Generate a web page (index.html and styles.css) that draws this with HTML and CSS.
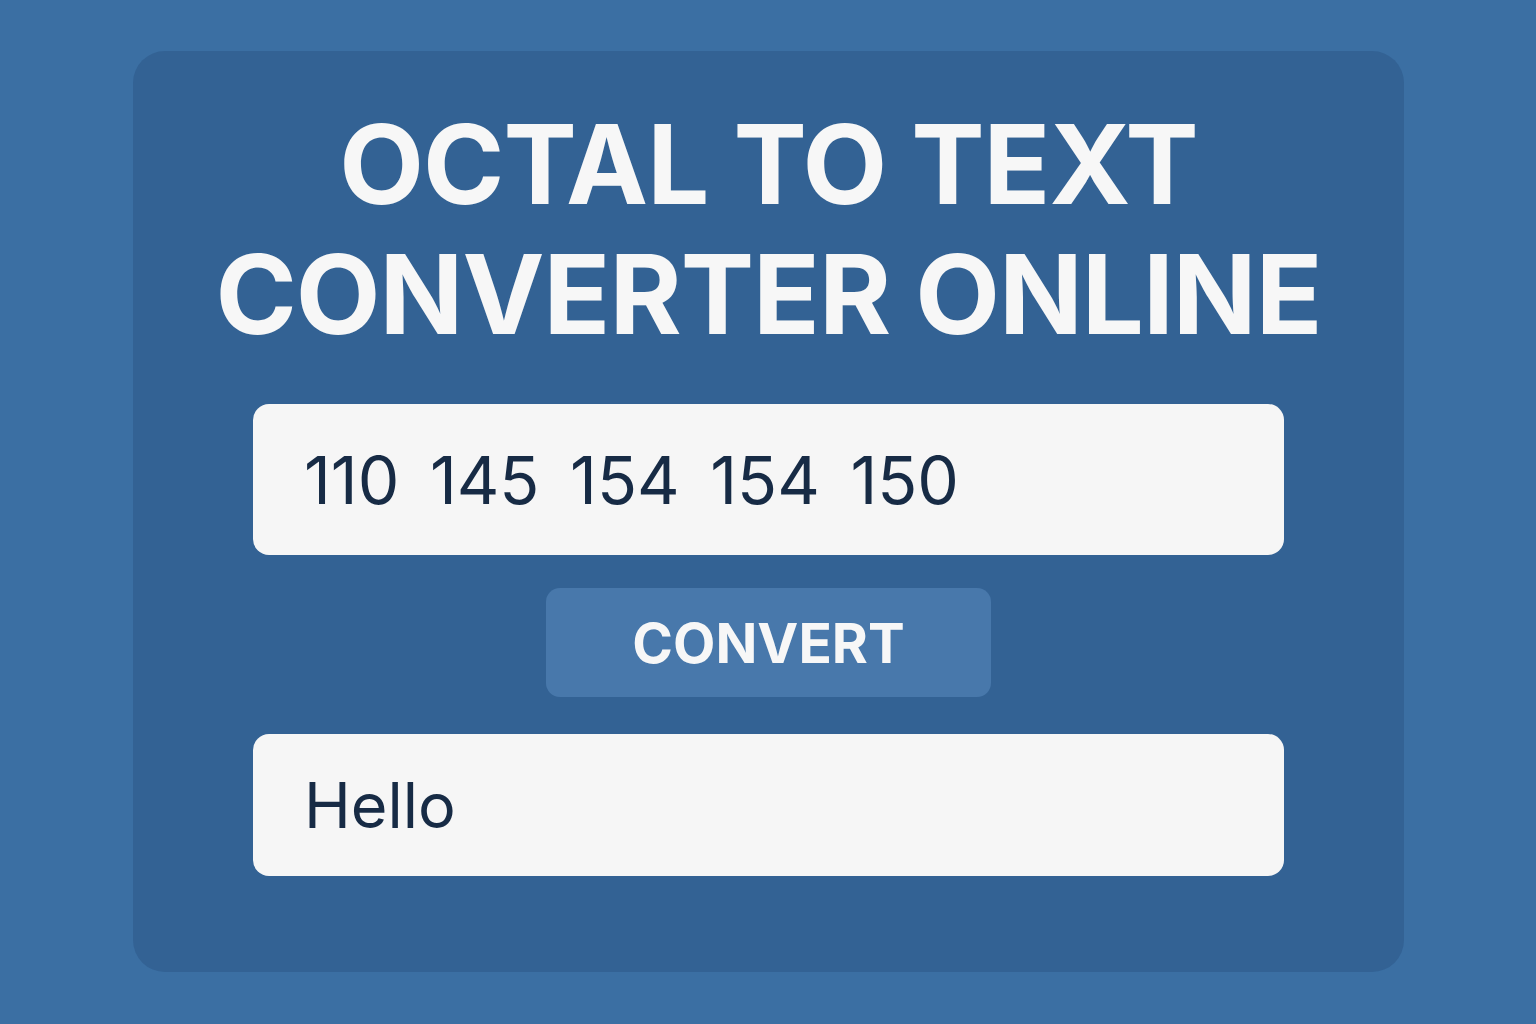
FILE: index.html
```html
<!DOCTYPE html>
<html lang="en">
<head>
    <meta charset="UTF-8">
    <meta name="viewport" content="width=device-width, initial-scale=1.0">
    <title>Octal to Text Converter Online</title>
    <link rel="stylesheet" href="styles.css">
</head>
<body>

<!-- Converter Card -->
<div class="card">
    <h1 class="title">OCTAL TO TEXT<br>CONVERTER ONLINE</h1>

    <!-- Octal Input -->
    <div class="field input-field">110 145 154 154 150</div>

    <!-- Convert Button -->
    <button type="button" class="convert">CONVERT</button>

    <!-- Text Output -->
    <div class="field output-field">Hello</div>
</div>

</body>
</html>
```

FILE: styles.css
```css
html, body {
    margin: 0;
    height: 100%;
}
body {
    background-color: #3b6fa3;
    font-family: Inter, "Noto Sans", Arial, sans-serif;
    padding: 51px 132px 52px 133px;
    box-sizing: border-box;
}
.card {
    height: 921px;
    background-color: #336294;
    border-radius: 32px;
    display: flex;
    flex-direction: column;
    align-items: center;
}
.title {
    margin: 48px 0 0;
    color: #f7f7f7;
    font-size: 110px;
    font-weight: 700;
    line-height: 130px;
    text-align: center;
    letter-spacing: -1px;
}
.field {
    width: 1031px;
    box-sizing: border-box;
    background-color: #f6f6f6;
    border-radius: 16px;
    color: #172b45;
    font-weight: 400;
    padding-left: 51px;
    display: flex;
    align-items: center;
    white-space: pre;
}
.input-field {
    height: 151px;
    margin-top: 45px;
    font-size: 66px;
    word-spacing: 12px;
}
.convert {
    width: 445px;
    height: 109px;
    margin-top: 33px;
    background-color: #4878ab;
    color: #f7f7f7;
    border: none;
    border-radius: 14px;
    font-family: Inter, "Noto Sans", Arial, sans-serif;
    font-size: 55px;
    font-weight: 700;
    cursor: pointer;
}
.output-field {
    height: 142px;
    margin-top: 37px;
    font-size: 63px;
}
```
